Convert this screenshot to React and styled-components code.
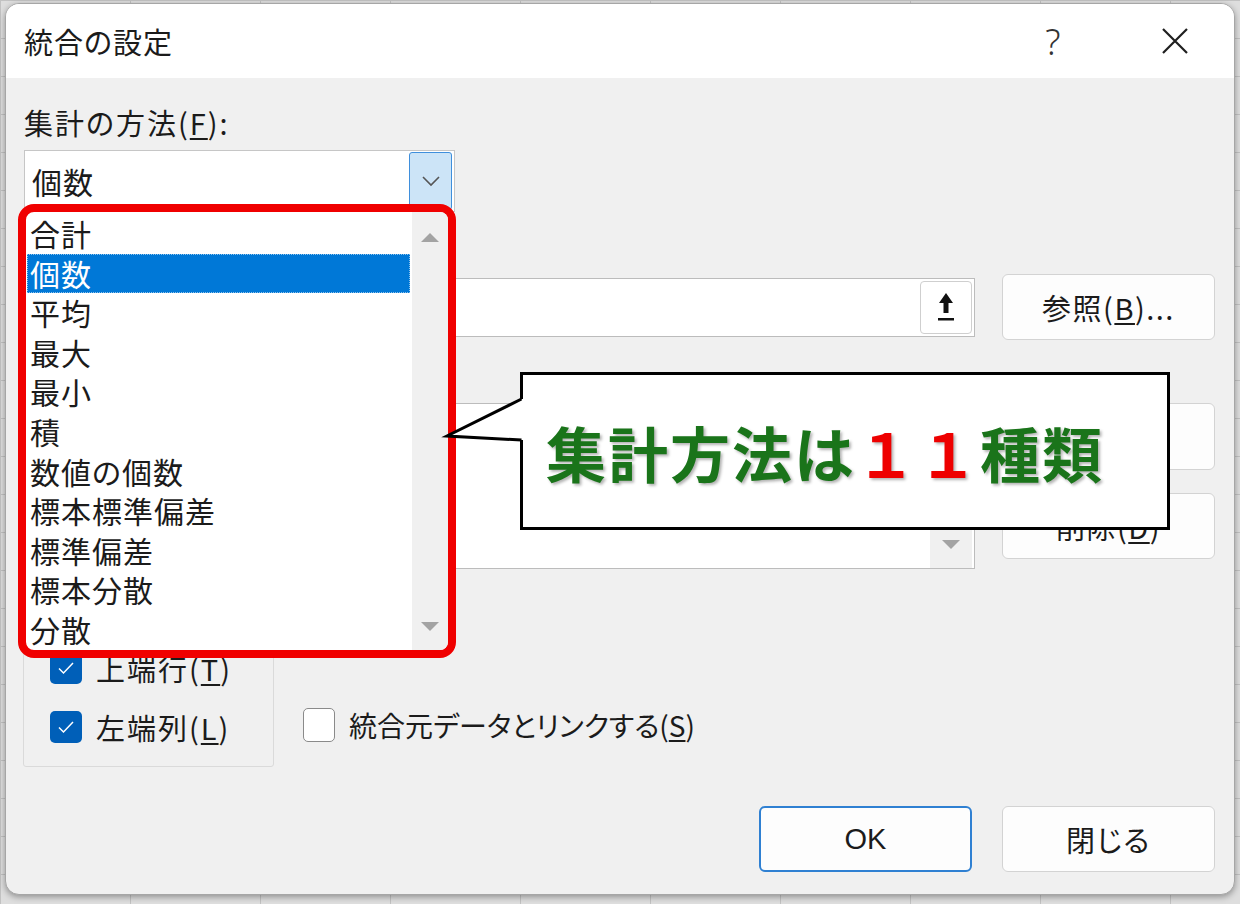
import React from 'react';
import styled, { createGlobalStyle } from 'styled-components';

const GlobalStyle = createGlobalStyle`
  html, body { margin: 0; padding: 0; }
  body {
    width: 1240px;
    height: 904px;
    overflow: hidden;
    font-family: "Noto Sans CJK JP", "Noto Sans", sans-serif;
  }
`;

const Screen = styled.div`
  width: 1240px;
  height: 904px;
  box-sizing: border-box;
  padding: 3px 5px 9px;
  background-color: #dedede;
  background-image: linear-gradient(#c2c2c2 1px, transparent 1px),
    linear-gradient(90deg, #c2c2c2 1px, transparent 1px);
  background-size: 130px 38px;
`;

const Dialog = styled.div`
  position: relative;
  width: 1230px;
  height: 892px;
  box-sizing: border-box;
  border: 1px solid #a6a6a6;
  border-radius: 14px;
  background: #f0f0f0;
  box-shadow: 0 2px 6px rgba(0, 0, 0, 0.35);
  display: flex;
  flex-direction: column;
  overflow: hidden;
  color: #1b1b1b;
  font-size: 29px;
  font-feature-settings: "palt";
`;

const TitleBar = styled.div`
  height: 74px;
  flex: none;
  background: #fff;
  display: flex;
  align-items: center;
  padding-left: 18px;
`;

const Title = styled.div`
  font-size: 29px;
  letter-spacing: 1px;
  flex: 1;
`;

const TitleButton = styled.div`
  width: 80px;
  height: 74px;
  display: flex;
  align-items: center;
  justify-content: center;
  font-family: "Noto Sans", sans-serif;
  font-size: 36px;
  font-weight: 300;
  color: #333;
  margin-right: ${p => p.$gap || 0}px;
`;

const Body = styled.div`
  flex: 1;
  display: flex;
  flex-direction: column;
  padding: 24px 19px 0 18px;
`;

const Label = styled.div`
  height: 40px;
  line-height: 40px;
  letter-spacing: 2px;
  margin-top: ${p => p.$top || 0}px;
`;

const Combo = styled.div`
  margin-top: 8px;
  width: 431px;
  height: 62px;
  box-sizing: border-box;
  background: #fff;
  border: 1px solid #c6c6c6;
  display: flex;
  align-items: center;
  padding-left: 7px;
  font-size: 30px;
  letter-spacing: 1px;
`;

const ComboButton = styled.div`
  margin-left: auto;
  margin-right: 2px;
  width: 43px;
  height: 58px;
  box-sizing: border-box;
  background: #cce4f7;
  border: 1px solid #3f8fdc;
  border-radius: 3px;
  display: flex;
  align-items: center;
  justify-content: center;
`;

const Row = styled.div`
  margin-top: ${p => p.$top || 0}px;
  display: flex;
  gap: 27px;
  align-items: ${p => p.$align || 'stretch'};
`;

const Field = styled.div`
  flex: 1;
  height: ${p => p.$h}px;
  box-sizing: border-box;
  background: #fff;
  border: 1px solid #bcbcbc;
  display: flex;
  justify-content: flex-end;
  align-items: ${p => p.$align || 'center'};
  padding-right: 2px;
`;

const CollapseButton = styled.div`
  width: 52px;
  height: 53px;
  box-sizing: border-box;
  background: #fff;
  border: 1px solid #cfcfcf;
  border-radius: 4px;
  display: flex;
  align-items: center;
  justify-content: center;
`;

const ScrollTrack = styled.div`
  width: ${p => p.$w}px;
  align-self: stretch;
  background: #f0f0f0;
  display: flex;
  flex-direction: column;
  justify-content: ${p => p.$justify || 'space-between'};
  align-items: center;
  padding: ${p => p.$pad || '0'};
`;

const ButtonColumn = styled.div`
  width: 213px;
  display: flex;
  flex-direction: column;
  gap: 23px;
`;

const Button = styled.div`
  width: 213px;
  height: ${p => p.$h || 66}px;
  box-sizing: border-box;
  background: #fdfdfd;
  border: ${p => (p.$primary ? '2px solid #2f80d2' : '1px solid #d3d3d3')};
  border-radius: 6px;
  display: flex;
  align-items: center;
  justify-content: center;
  font-size: 29px;
  letter-spacing: ${p => (p.$latin ? 0 : 1.5)}px;
  font-family: ${p => (p.$latin ? '"Liberation Sans", sans-serif' : 'inherit')};
`;

const Key = styled.span`
  text-decoration: underline;
  text-underline-offset: 3px;
  text-decoration-thickness: 2px;
`;

const GroupRow = styled.div`
  margin-top: 31px;
  display: flex;
  align-items: flex-end;
`;

const Group = styled.div`
  margin-left: -1px;
  width: 251px;
  height: 167px;
  box-sizing: border-box;
  border: 1px solid #dadada;
  border-radius: 3px;
  display: flex;
  flex-direction: column;
  padding: 4px 0 0 26px;
`;

const CheckRow = styled.div`
  height: 44px;
  display: flex;
  align-items: center;
  gap: 14px;
  font-size: ${p => p.$size || 29}px;
  letter-spacing: ${p => p.$spacing ?? 2}px;
  margin-top: ${p => p.$top || 0}px;
  margin-left: ${p => p.$left || 0}px;
  margin-bottom: ${p => p.$bottom || 0}px;
`;

const Box = styled.div`
  width: 32px;
  height: ${p => p.$h || 32}px;
  box-sizing: border-box;
  border-radius: 5px;
  background: ${p => (p.$checked ? '#005fb8' : '#fff')};
  border: ${p => (p.$checked ? 'none' : '1.5px solid #8a8a8a')};
  display: flex;
  align-items: center;
  justify-content: center;
`;

const Footer = styled.div`
  margin-top: 39px;
  display: flex;
  justify-content: flex-end;
  gap: 30px;
`;

/* red annotation frame around the opened drop-down list */
const ListFrame = styled.div`
  position: absolute;
  left: 12px;
  top: 200px;
  width: 438px;
  height: 454px;
  box-sizing: border-box;
  border: 8px solid #f00000;
  border-radius: 16px;
  overflow: hidden;
  background: #fff;
  display: flex;
`;

const Items = styled.div`
  flex: 1;
  padding: 2px 2px 0 1px;
`;

const Item = styled.div`
  height: 39.6px;
  line-height: 39.6px;
  padding-left: 3px;
  font-size: 30px;
  letter-spacing: 1px;
  background: ${p => (p.$selected ? '#0078d7' : 'transparent')};
  color: ${p => (p.$selected ? '#fff' : '#1b1b1b')};
  outline: ${p => (p.$selected ? '1px dotted rgba(255,255,255,0.55)' : 'none')};
  outline-offset: -1px;
`;

const Callout = styled.div`
  position: absolute;
  left: 514px;
  top: 368px;
  width: 650px;
  height: 158px;
  box-sizing: border-box;
  border: 3px solid #000;
  background: #fff;
  display: flex;
  align-items: center;
  padding-left: 23px;
  font-size: 60px;
  font-weight: 700;
  letter-spacing: 2px;
  font-feature-settings: normal;
  color: #1a741a;
  text-shadow: 2px 2px 3px rgba(0, 0, 0, 0.3);
`;

const Red = styled.span`
  color: #ee0000;
`;

const Tail = styled.svg`
  position: absolute;
  left: 434px;
  top: 386px;
`;

const Triangle = ({ down, size = 20 }) => (
  <svg width={size} height={size * 0.55} viewBox="0 0 20 11">
    <path d={down ? 'M1 1 H19 L10 10 Z' : 'M1 10 H19 L10 1 Z'} fill="#a3a3a3" />
  </svg>
);

const Check = () => (
  <svg width="18" height="14" viewBox="0 0 18 14">
    <path d="M2 7.5 L6.5 12 L16 2" fill="none" stroke="#fff" strokeWidth="1.5" />
  </svg>
);

const methods = ['合計', '個数', '平均', '最大', '最小', '積', '数値の個数', '標本標準偏差', '標準偏差', '標本分散', '分散'];

export default function App() {
  return (
    <Screen>
      <GlobalStyle />
      <Dialog>
        <TitleBar>
          <Title>統合の設定</Title>
          <TitleButton $gap={42}>?</TitleButton>
          <TitleButton $gap={19}>
            <svg width="28" height="28" viewBox="0 0 28 28">
              <path d="M2 2 L26 26 M26 2 L2 26" stroke="#1f1f1f" strokeWidth="2.2" />
            </svg>
          </TitleButton>
        </TitleBar>

        <Body>
          <Label>集計の方法(<Key>F</Key>):</Label>
          <Combo>
            個数
            <ComboButton>
              <svg width="20" height="12" viewBox="0 0 20 12">
                <path d="M2 2 L10 10 L18 2" fill="none" stroke="#555" strokeWidth="1.6" />
              </svg>
            </ComboButton>
          </Combo>

          <Label $top={14}>統合元範囲(<Key>R</Key>):</Label>
          <Row $top={8} $align="center">
            <Field $h={59}>
              <CollapseButton>
                <svg width="22" height="32" viewBox="0 0 22 32">
                  <path d="M11 2 L18 12 H13.5 V22 H8.5 V12 H4 Z" fill="#111" />
                  <rect x="3" y="27" width="16" height="2.5" fill="#111" />
                </svg>
              </CollapseButton>
            </Field>
            <Button>参照(<Key>B</Key>)...</Button>
          </Row>

          <Label $top={10}>統合元(<Key>E</Key>):</Label>
          <Row $top={13}>
            <Field $h={166} $align="stretch">
              <ScrollTrack $w={42} $justify="flex-end" $pad="0 0 18px">
                <Triangle down />
              </ScrollTrack>
            </Field>
            <ButtonColumn>
              <Button $h={67}>追加(<Key>A</Key>)</Button>
              <Button>削除(<Key>D</Key>)</Button>
            </ButtonColumn>
          </Row>

          <GroupRow>
            <Group>
              <Label>統合の基準</Label>
              <CheckRow $top={1}>
                <Box $checked><Check /></Box>
                <span>上端行(<Key>T</Key>)</span>
              </CheckRow>
              <CheckRow $top={15}>
                <Box $checked><Check /></Box>
                <span>左端列(<Key>L</Key>)</span>
              </CheckRow>
            </Group>
            <CheckRow $left={29} $bottom={20} $size={28} $spacing={0}>
              <Box $h={34} />
              <span>統合元データとリンクする(<Key>S</Key>)</span>
            </CheckRow>
          </GroupRow>

          <Footer>
            <Button $primary $latin>OK</Button>
            <Button>閉じる</Button>
          </Footer>
        </Body>

        <ListFrame>
          <Items>
            {methods.map(m => (
              <Item key={m} $selected={m === '個数'}>{m}</Item>
            ))}
          </Items>
          <ScrollTrack $w={36} $pad="20px 0 18px">
            <Triangle />
            <Triangle down />
          </ScrollTrack>
        </ListFrame>

        <Callout>
          集計方法は<Red>１１</Red>種類
        </Callout>
        <Tail width="92" height="64" viewBox="0 0 92 64">
          <polygon points="7,46 81.5,9 88,9 88,50 81.5,50" fill="#fff" />
          <polyline points="81.5,9 7,46 81.5,50" fill="none" stroke="#000" strokeWidth="3" strokeLinejoin="miter" />
        </Tail>
      </Dialog>
    </Screen>
  );
}
